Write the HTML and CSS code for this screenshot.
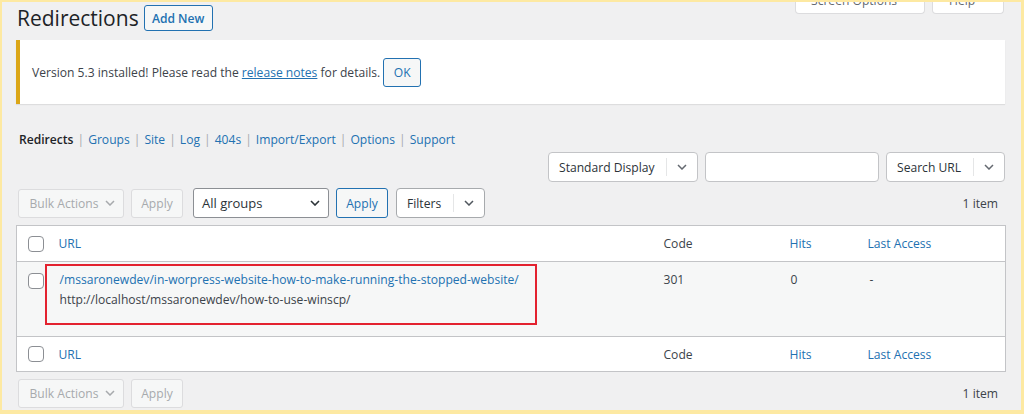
FILE: index.html
```html
<!DOCTYPE html>
<html lang="en">
<head>
<meta charset="utf-8">
<title>Redirections</title>
<link rel="stylesheet" href="styles.css">
</head>
<body>
<div class="frame">
  <div class="page">
    <div class="head">
      <h1 class="title">Redirections</h1>
      <a class="btn btn-secondary add-new" href="#">Add New</a>
      <div class="meta-tabs">
        <div class="tab tab-options">Screen Options</div>
        <div class="tab tab-help">Help</div>
      </div>
    </div>

    <div class="notice">
      <p>Version 5.3 installed! Please read the <a href="#">release notes</a> for details.</p>
      <button class="btn btn-secondary ok">OK</button>
    </div>

    <ul class="subsubsub">
      <li class="current">Redirects</li>
      <li class="sep">|</li>
      <li><a href="#">Groups</a></li>
      <li class="sep">|</li>
      <li><a href="#">Site</a></li>
      <li class="sep">|</li>
      <li><a href="#">Log</a></li>
      <li class="sep">|</li>
      <li><a href="#">404s</a></li>
      <li class="sep">|</li>
      <li><a href="#">Import/Export</a></li>
      <li class="sep">|</li>
      <li><a href="#">Options</a></li>
      <li class="sep">|</li>
      <li><a href="#">Support</a></li>
    </ul>

    <div class="search-row">
      <div class="split split-display">
        <span class="split-label">Standard Display</span>
        <span class="split-chev"><svg class="chev" viewBox="0 0 10 6" width="10" height="6"><path d="M1 1l4 4 4-4"/></svg></span>
      </div>
      <div class="search-input"></div>
      <div class="split split-search">
        <span class="split-label">Search URL</span>
        <span class="split-chev"><svg class="chev" viewBox="0 0 10 6" width="10" height="6"><path d="M1 1l4 4 4-4"/></svg></span>
      </div>
    </div>

    <div class="tablenav">
      <div class="actions">
        <div class="btn btn-disabled bulk">Bulk Actions <svg class="chev" viewBox="0 0 10 6" width="10" height="6"><path d="M1 1l4 4 4-4"/></svg></div>
        <div class="btn btn-disabled apply">Apply</div>
        <div class="select groups"><span>All groups</span><svg class="chev" viewBox="0 0 10 6" width="10" height="6"><path d="M1 1l4 4 4-4"/></svg></div>
        <div class="btn btn-secondary apply apply-on">Apply</div>
        <div class="split split-filters">
          <span class="split-label">Filters</span>
          <span class="split-chev"><svg class="chev" viewBox="0 0 10 6" width="10" height="6"><path d="M1 1l4 4 4-4"/></svg></span>
        </div>
      </div>
      <div class="count">1 item</div>
    </div>

    <table class="list">
      <colgroup>
        <col class="c-cb"><col class="c-url"><col class="c-code"><col class="c-hits"><col class="c-last">
      </colgroup>
      <thead>
        <tr>
          <td class="cb"><span class="checkbox"></span></td>
          <th class="link">URL</th>
          <th>Code</th>
          <th class="link">Hits</th>
          <th class="link">Last Access</th>
        </tr>
      </thead>
      <tbody>
        <tr class="alt">
          <td class="cb"><span class="checkbox"></span></td>
          <td class="url">
            <div class="url-wrap">
              <a href="#">/mssaronewdev/in-worpress-website-how-to-make-running-the-stopped-website/</a>
              <div class="target">http://localhost/mssaronewdev/how-to-use-winscp/</div>
              <div class="highlight"></div>
            </div>
          </td>
          <td>301</td>
          <td class="hits">0</td>
          <td class="last">-</td>
        </tr>
      </tbody>
      <tfoot>
        <tr>
          <td class="cb"><span class="checkbox"></span></td>
          <th class="link">URL</th>
          <th>Code</th>
          <th class="link">Hits</th>
          <th class="link">Last Access</th>
        </tr>
      </tfoot>
    </table>

    <div class="tablenav bottom">
      <div class="actions">
        <div class="btn btn-disabled bulk">Bulk Actions <svg class="chev" viewBox="0 0 10 6" width="10" height="6"><path d="M1 1l4 4 4-4"/></svg></div>
        <div class="btn btn-disabled apply">Apply</div>
      </div>
      <div class="count">1 item</div>
    </div>
  </div>
</div>
</body>
</html>
```

FILE: styles.css
```css
* { box-sizing: border-box; }

html, body {
  margin: 0;
  padding: 0;
}

body {
  font-family: "Open Sans", "Noto Sans", sans-serif;
  font-size: 12.1px;
  color: #3c434a;
  background: #f0f0f1;
}

a { color: #2271b1; text-decoration: none; }

.frame {
  width: 1024px;
  height: 414px;
  overflow: hidden;
  border-style: solid;
  border-color: #fde9a2;
  border-width: 2px 3px 4px 2px;
  background: #f0f0f1;
}

.page {
  padding: 0 16px 0 14px;
}

/* header */
.head {
  display: flex;
  align-items: center;
  height: 32px;
}

.title {
  margin: 0;
  padding-left: 1px;
  font-size: 21px;
  font-weight: 400;
  line-height: 28px;
  color: #1d2327;
}

.btn {
  display: inline-flex;
  align-items: center;
  justify-content: center;
  height: 29px;
  border: 1px solid;
  border-radius: 3px;
  font-size: 12.1px;
  white-space: nowrap;
}

.btn-secondary {
  color: #2271b1;
  border-color: #2271b1;
  background: #f6f7f7;
}

.btn-disabled {
  color: #a7aaad;
  border-color: #dcdcde;
  background: #f6f7f7;
}

.add-new {
  margin-left: 5px;
  width: 69px;
  height: 26px;
  font-weight: 600;
}

.meta-tabs {
  margin-left: auto;
  margin-right: 1px;
  align-self: flex-start;
  margin-top: -16px;
  display: flex;
  gap: 7px;
}

.tab {
  height: 28px;
  padding: 5px 0 0 15px;
  background: #fff;
  border: 1px solid #dcdcde;
  border-top: none;
  border-radius: 0 0 4px 4px;
  color: #646970;
  line-height: 20px;
  font-size: 12.1px;
}

.tab-options { width: 130px; }
.tab-help { width: 72px; padding-left: 16px; }

/* notice */
.notice {
  margin-top: 6px;
  height: 64px;
  display: flex;
  align-items: center;
  padding: 0 12px 0 12px;
  background: #fff;
  border-left: 4px solid #dba617;
  box-shadow: 0 1px 1px rgba(0, 0, 0, 0.08);
}

.notice p {
  margin: 0;
  padding-top: 1px;
}

.notice a {
  text-decoration: underline;
}

.ok {
  margin-left: 3px;
  width: 38px;
  height: 29px;
  border-color: #2271b1;
  font-family: inherit;
  font-size: 12.1px;
}

/* nav */
.subsubsub {
  list-style: none;
  margin: 26px 0 0;
  padding: 0 0 0 3px;
  display: flex;
  gap: 4px;
  line-height: 20px;
}

.subsubsub .current {
  color: #1d2327;
  font-weight: 600;
}

.subsubsub .sep {
  color: #a7aaad;
}

/* search row */
.search-row {
  margin-top: 2px;
  display: flex;
  justify-content: flex-end;
  gap: 7px;
}

.split {
  display: flex;
  align-items: center;
  height: 30px;
  background: #fff;
  border: 1px solid #c3c4c7;
  border-radius: 4px;
  color: #2c3338;
}

.split-label {
  flex: 1;
  padding-left: 10px;
  white-space: nowrap;
}

.split-chev {
  width: 31px;
  height: 18px;
  border-left: 1px solid #e5e6e7;
  display: flex;
  align-items: center;
  justify-content: center;
  color: #646970;
}

.split-display { width: 150px; }
.split-search { width: 119px; }
.split-filters { width: 89px; border-color: #a7aaad; }
.split-filters .split-chev { color: #50575e; }

.search-input {
  width: 174px;
  height: 30px;
  background: #fff;
  border: 1px solid #c3c4c7;
  border-radius: 4px;
}

.chev {
  fill: none;
  stroke: currentColor;
  stroke-width: 1.5;
}

/* tablenav */
.tablenav {
  margin-top: 6px;
  height: 30px;
  display: flex;
  align-items: center;
  justify-content: space-between;
}

.tablenav.bottom {
  margin-top: 6px;
}

.actions {
  display: flex;
  align-items: center;
  padding-left: 2px;
}

.bulk {
  width: 106px;
  gap: 6px;
  padding-left: 2px;
}

.apply {
  width: 52px;
  margin-left: 7px;
}

.apply-on {
  margin-left: 7px;
  height: 30px;
}

.select {
  display: flex;
  align-items: center;
  justify-content: space-between;
  width: 136px;
  height: 30px;
  margin-left: 10px;
  padding: 0 8px 0 8px;
  background: #fff;
  border: 1px solid #8c8f94;
  border-radius: 3px;
  color: #2c3338;
  font-size: 13px;
}

.select .chev {
  stroke-width: 1.6;
}

.split-filters {
  margin-left: 8px;
}

.count {
  color: #3c434a;
  padding-right: 7px;
}

/* table */
.list {
  margin-top: 7px;
  width: 100%;
  table-layout: fixed;
  border-collapse: collapse;
  background: #fff;
  border: 1px solid #c3c4c7;
}

.c-cb { width: 34px; }
.c-url { width: 605px; }
.c-code { width: 126px; }
.c-hits { width: 78px; }
.c-last { width: 146px; }

.list th,
.list td {
  padding: 0 8px;
  text-align: left;
  font-weight: 400;
  vertical-align: middle;
}

.list thead tr {
  height: 36px;
  border-bottom: 1px solid #c3c4c7;
}

.list tfoot tr {
  height: 35px;
  border-top: 1px solid #c3c4c7;
}

.list th { color: #3c434a; }
.list th.link { color: #2271b1; }

.list .cb {
  padding: 0 0 0 11px;
}

.checkbox {
  display: block;
  width: 16px;
  height: 16px;
  border: 1px solid #8c8f94;
  border-radius: 4px;
  background: #fff;
}

.list tbody tr.alt {
  background: #f6f7f7;
  height: 75px;
}

.list tbody td {
  vertical-align: top;
  padding-top: 8px;
  line-height: 20px;
}

.list tbody td.cb {
  padding-top: 11px;
}

.list tbody td.url {
  padding-left: 9px;
}

.list tbody td.hits { padding-left: 9px; }
.list tbody td.last { padding-left: 10px; }

.url-wrap {
  position: relative;
}

.target {
  color: #3c434a;
}

.highlight {
  position: absolute;
  left: -15px;
  top: -6px;
  width: 492px;
  height: 61px;
  border: 2px solid #e3222f;
}
```
